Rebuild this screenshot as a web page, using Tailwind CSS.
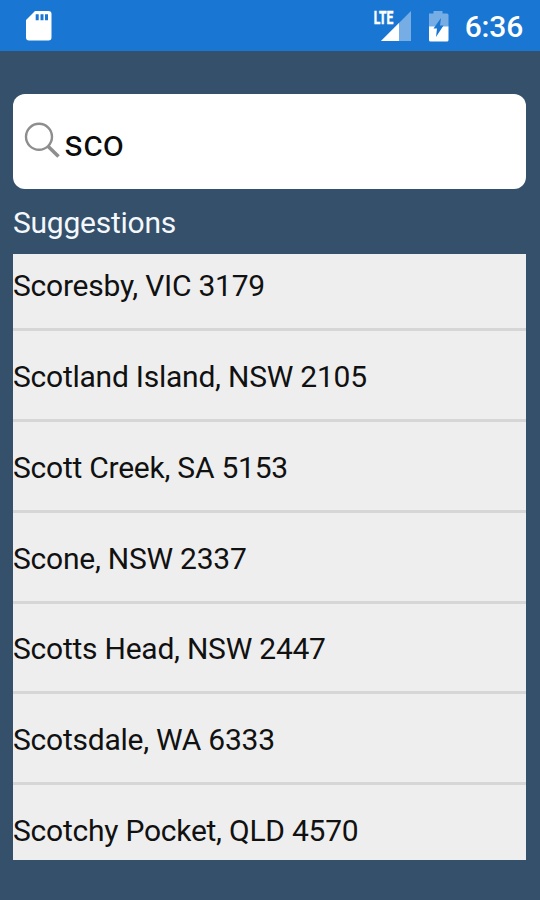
<!DOCTYPE html>
<html lang="en">
<head>
    <meta charset="UTF-8">
    <meta name="viewport" content="width=device-width, initial-scale=1.0">
    <title>Suburb Search</title>
    <script src="https://cdn.jsdelivr.net/npm/@tailwindcss/browser@4"></script>
</head>
<body class="flex flex-col h-screen overflow-hidden bg-[#34506a] font-['Roboto',sans-serif]">
    <!-- Status bar -->
    <header class="flex items-center h-[51px] shrink-0 bg-[#1976d2] text-white pl-[25px] pr-[17px]">
        <svg class="w-[28px] h-[32px]" viewBox="0 0 28 32">
            <path d="M10 1h13.500a3 3 0 0 1 3 3v23.500a3 3 0 0 1-3 3H4a3 3 0 0 1-3-3V10z" fill="#fff" />
            <path d="M10.700 4.300h3v6h-3zM15.500 4.300h3v6h-3zM20 4.300h3v6h-3z" fill="#1976d2" />
        </svg>
        <svg class="ml-auto w-[40px] h-[34px]" viewBox="373 9 40 34">
            <path d="M412 11v30h-30z" fill="#75ade4" />
            <path d="M400 23v18h-18z" fill="#fff" />
            <text x="374.800" y="24" font-size="17.500" font-weight="700" textLength="19.500" lengthAdjust="spacingAndGlyphs" fill="#fff" stroke="#fff" stroke-width="0.500">LTE</text>
        </svg>
        <svg class="ml-[16px] w-[21px] h-[32px]" viewBox="429 10 21 32">
            <path d="M430 13.500h4.500V11h9v2.500h4.500q1.500 0 1.500 1.500v12H430z" fill="#75ade4" />
            <path d="M430 26.500h19.500V40q0 1.500-1.500 1.500h-16.500q-1.500 0-1.500-1.500z" fill="#fff" />
            <path d="M442 18l-1 7.500h3.500L437 37l1-8.500H434.500z" fill="#1976d2" />
        </svg>
        <span class="ml-[15.500px] mt-[3px] text-[30px] leading-[36px] tracking-[-0.200px] font-medium">6:36</span>
    </header>

    <main class="flex flex-col pl-[13px] pr-[14.500px] pt-[42.500px]">
        <!-- Search box -->
        <div class="flex items-center h-[95.500px] shrink-0 rounded-[12px] bg-white pl-[11px]">
            <svg class="w-[38px] h-[38px]" viewBox="0 0 38 38" fill="none" stroke="#8e8e8e">
                <circle cx="15" cy="14.800" r="13" stroke-width="2.400" />
                <path d="M24 24.200L34.500 34.500" stroke-width="3.600" />
            </svg>
            <span class="ml-[2px] mt-[6px] text-[37px] leading-[42px] tracking-[0.200px] text-[#0c0c0c]">sco</span>
        </div>

        <h2 class="h-[64.500px] pt-[16px] text-[30px] leading-[36px] tracking-[-0.240px] text-[#f4f8fc]">Suggestions</h2>

        <!-- Suggestions list, scrolled a little past its top -->
        <div class="h-[606.300px] overflow-hidden bg-[#eeeeee] text-[30px] leading-[36px] tracking-[-0.240px] text-[#111111]">
            <ul class="-mt-[12.800px]">
                <li class="flex items-center h-[90.750px] border-b-[3px] border-[#d6d6d6] pt-[3.500px]">Scoresby, VIC 3179</li>
                <li class="flex items-center h-[90.750px] border-b-[3px] border-[#d6d6d6] pt-[3.500px]">Scotland Island, NSW 2105</li>
                <li class="flex items-center h-[90.750px] border-b-[3px] border-[#d6d6d6] pt-[3.500px]">Scott Creek, SA 5153</li>
                <li class="flex items-center h-[90.750px] border-b-[3px] border-[#d6d6d6] pt-[3.500px]">Scone, NSW 2337</li>
                <li class="flex items-center h-[90.750px] border-b-[3px] border-[#d6d6d6] pt-[3.500px]">Scotts Head, NSW 2447</li>
                <li class="flex items-center h-[90.750px] border-b-[3px] border-[#d6d6d6] pt-[3.500px]">Scotsdale, WA 6333</li>
                <li class="flex items-center h-[90.750px] border-b-[3px] border-[#d6d6d6] pt-[3.500px]">Scotchy Pocket, QLD 4570</li>
            </ul>
        </div>
    </main>
</body>
</html>
